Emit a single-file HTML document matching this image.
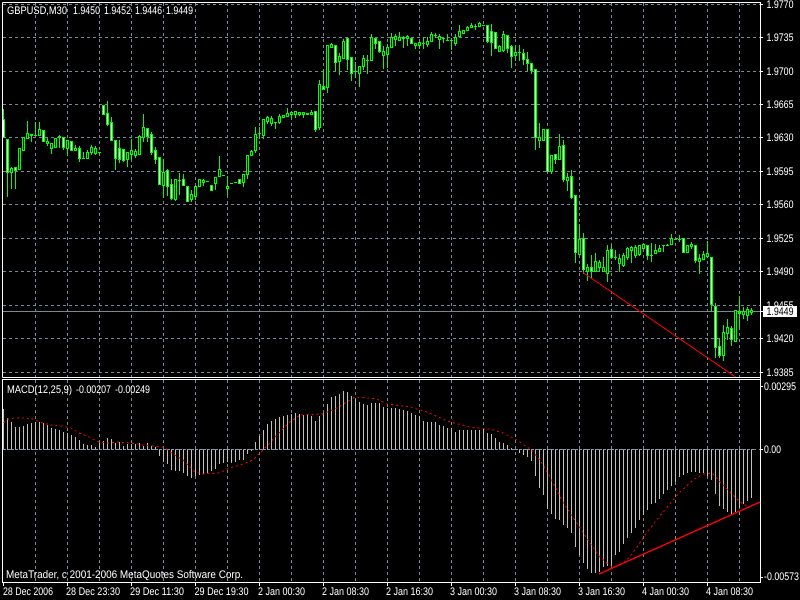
<!DOCTYPE html>
<html><head><meta charset="utf-8"><title>GBPUSD,M30</title>
<style>
html,body{margin:0;padding:0;background:#000;width:800px;height:600px;overflow:hidden}
svg{display:block;position:absolute;left:0;top:0}
text{font-family:"Liberation Sans",sans-serif;font-size:11px;fill:#fff;text-rendering:geometricPrecision}
path,rect,line,polyline{shape-rendering:crispEdges}
</style></head><body>
<svg width="800" height="600" viewBox="0 0 800 600" xmlns="http://www.w3.org/2000/svg">
<rect width="800" height="600" fill="#000"/>
<!-- grid -->
<path fill="none" stroke="#778899" stroke-dasharray="3 3" d="M3 4.5H760M3 37.5H760M3 71.5H760M3 104.5H760M3 137.5H760M3 171.5H760M3 204.5H760M3 238.5H760M3 271.5H760M3 305.5H760M3 338.5H760M3 372.5H760M3 449.5H760M35.5 3V377M67.5 3V377M99.5 3V377M131.5 3V377M163.5 3V377M195.5 3V377M227.5 3V377M259.5 3V377M291.5 3V377M323.5 3V377M355.5 3V377M387.5 3V377M419.5 3V377M451.5 3V377M483.5 3V377M515.5 3V377M547.5 3V377M579.5 3V377M611.5 3V377M643.5 3V377M675.5 3V377M707.5 3V377M739.5 3V377M35.5 380V582M67.5 380V582M99.5 380V582M131.5 380V582M163.5 380V582M195.5 380V582M227.5 380V582M259.5 380V582M291.5 380V582M323.5 380V582M355.5 380V582M387.5 380V582M419.5 380V582M451.5 380V582M483.5 380V582M515.5 380V582M547.5 380V582M579.5 380V582M611.5 380V582M643.5 380V582M675.5 380V582M707.5 380V582M739.5 380V582"/>
<!-- price line -->
<path stroke="#778899" d="M3 311.5H760"/>
<!-- wicks -->
<path fill="none" stroke="#00ff00" d="M3.5 109V138M7.5 139V197M11.5 167V189M15.5 167V189M19.5 148V170M23.5 137V151M27.5 121V139M31.5 134V142M35.5 122V136M39.5 122V136M43.5 130V142M47.5 138V146M51.5 143V154M55.5 138V148M59.5 135V148M63.5 137V150M67.5 140V156M71.5 141V151M75.5 145V151M79.5 146V162M83.5 152V159M87.5 150V159M91.5 145V155M95.5 146V155M99.5 152V155M103.5 105V115M107.5 101V126M111.5 117V141M115.5 140V170M119.5 140V163M123.5 149V162M127.5 152V167M131.5 139V160M135.5 149V158M139.5 135V155M143.5 114V142M147.5 128V142M151.5 132V155M155.5 147V164M159.5 157V185M163.5 159V198M167.5 169V196M171.5 179V200M175.5 179V201M179.5 173V195M183.5 174V186M187.5 186V202M191.5 190V202M195.5 186V200M199.5 179V187M203.5 179V186M207.5 181V182M211.5 185V191M215.5 177V190M219.5 156V177M223.5 175V176M227.5 176V195M231.5 183V184M235.5 182V183M239.5 179V184M243.5 174V187M247.5 155V179M251.5 150V156M255.5 127V153M259.5 127V139M263.5 119V139M267.5 116V124M271.5 116V126M275.5 122V129M279.5 114V124M283.5 115V118M287.5 108V117M291.5 112V118M295.5 111V118M299.5 112V116M303.5 112V118M307.5 113V115M311.5 110V115M315.5 111V132M319.5 80V130M323.5 70V90M327.5 45V93M331.5 43V48M335.5 45V71M339.5 53V75M343.5 39V59M347.5 38V70M351.5 57V81M355.5 62V78M359.5 66V87M363.5 55V70M367.5 55V74M371.5 34V61M375.5 38V49M379.5 41V53M383.5 46V69M387.5 44V68M391.5 33V48M395.5 34V46M399.5 32V41M403.5 36V48M407.5 35V46M411.5 38V44M415.5 43V49M419.5 42V49M423.5 37V49M427.5 37V47M431.5 32V42M435.5 33V38M439.5 34V49M443.5 38V43M447.5 34V41M451.5 38V50M455.5 34V46M459.5 25V37M463.5 30V34M467.5 26V31M471.5 23V28M475.5 24V30M479.5 22V27M483.5 25V26M487.5 25V43M491.5 24V56M495.5 32V49M499.5 45V52M503.5 31V52M507.5 35V53M511.5 45V68M515.5 47V61M519.5 45V61M523.5 49V65M527.5 52V71M531.5 63V74M535.5 69V150M539.5 123V148M543.5 129V141M547.5 129V172M551.5 155V174M555.5 154V164M559.5 134V160M563.5 140V182M567.5 173V191M571.5 170V199M575.5 195V263M579.5 224V255M583.5 233V274M587.5 264V281M591.5 255V278M595.5 253V272M599.5 260V272M603.5 257V272M607.5 245V282M611.5 245V259M615.5 250V260M619.5 254V272M623.5 253V267M627.5 247V260M631.5 246V263M635.5 245V258M639.5 245V256M643.5 243V249M647.5 245V260M651.5 243V262M655.5 244V254M659.5 245V252M663.5 245V252M667.5 244V246M671.5 234V245M675.5 239V240M679.5 235V242M683.5 238V253M687.5 245V253M691.5 242V249M695.5 245V263M699.5 254V274M703.5 251V260M707.5 241V258M711.5 257V312M715.5 303V358M719.5 338V358M723.5 325V361M727.5 319V340M731.5 326V346M735.5 310V342M739.5 296V330M743.5 307V319M747.5 307V321M751.5 308V315"/>
<!-- bodies -->
<path fill="none" stroke="#00ff00" stroke-width="3" d="M3.5 119V138M7.5 139V173M11.5 168V173M15.5 167V171M19.5 148V170M23.5 137V151M27.5 133V139M31.5 134V136M35.5 135V136M39.5 129V136M43.5 130V142M47.5 141V144M51.5 143V149M55.5 138V148M59.5 136V138M63.5 137V148M67.5 140V149M71.5 141V151M75.5 148V151M79.5 148V159M83.5 158V159M87.5 152V159M91.5 147V153M95.5 148V154M99.5 152V153M103.5 105V115M107.5 113V125M111.5 122V141M115.5 140V159M119.5 148V160M123.5 149V161M127.5 152V160M131.5 150V155M135.5 151V156M139.5 136V155M143.5 127V138M147.5 128V137M151.5 134V153M155.5 150V160M159.5 157V185M163.5 172V186M167.5 170V187M171.5 184V199M175.5 179V200M179.5 180V181M183.5 179V186M187.5 186V202M191.5 194V200M195.5 186V197M199.5 179V187M203.5 180V183M207.5 181V182M211.5 185V191M215.5 177V184M219.5 169V177M223.5 175V176M227.5 186V189M231.5 183V184M235.5 182V183M239.5 179V184M243.5 174V183M247.5 155V175M251.5 151V156M255.5 134V151M259.5 133V134M263.5 119V136M267.5 117V122M271.5 118V124M275.5 122V123M279.5 116V123M283.5 115V118M287.5 113V117M291.5 112V115M295.5 111V115M299.5 112V115M303.5 112V115M307.5 113V115M311.5 112V115M315.5 111V130M319.5 84V128M323.5 86V90M327.5 45V88M331.5 44V48M335.5 45V63M339.5 56V62M343.5 41V59M347.5 38V60M351.5 57V74M355.5 71V72M359.5 66V74M363.5 58V67M367.5 60V61M371.5 37V61M375.5 38V44M379.5 41V52M383.5 51V56M387.5 47V55M391.5 37V48M395.5 36V40M399.5 37V41M403.5 37V39M407.5 36V39M411.5 38V44M415.5 43V46M419.5 42V46M423.5 43V44M427.5 41V45M431.5 34V42M435.5 35V36M439.5 36V40M443.5 38V39M447.5 40V41M451.5 40V41M455.5 37V44M459.5 31V37M463.5 30V34M467.5 27V31M471.5 25V28M475.5 26V27M479.5 23V27M483.5 25V26M487.5 25V42M491.5 31V43M495.5 32V49M499.5 46V52M503.5 34V51M507.5 35V49M511.5 46V57M515.5 52V56M519.5 52V53M523.5 53V60M527.5 59V64M531.5 63V71M535.5 69V138M539.5 137V141M543.5 129V141M547.5 129V172M551.5 155V172M555.5 154V160M559.5 146V160M563.5 145V180M567.5 177V181M571.5 176V198M575.5 195V253M579.5 239V255M583.5 238V270M587.5 267V272M591.5 267V272M595.5 261V272M599.5 262V268M603.5 267V272M607.5 250V274M611.5 249V258M615.5 257V258M619.5 258V264M623.5 255V266M627.5 248V258M631.5 247V251M635.5 247V256M639.5 245V255M643.5 244V249M647.5 245V256M651.5 255V256M655.5 250V254M659.5 248V252M663.5 245V246M667.5 245V246M671.5 238V245M675.5 239V240M679.5 239V240M683.5 238V253M687.5 245V253M691.5 244V247M695.5 245V261M699.5 258V262M703.5 254V260M707.5 253V257M711.5 257V305M715.5 306V348M719.5 346V356M723.5 332V356M727.5 327V334M731.5 328V340M735.5 310V342M739.5 311V314M743.5 311V315M747.5 309V316M751.5 310V313"/>
<!-- white-filled interiors -->
<path fill="none" stroke="#ffffff" d="M3.5 120V137M7.5 140V172M15.5 168V170M43.5 131V141M63.5 138V147M71.5 142V150M79.5 149V158M103.5 106V114M107.5 114V124M111.5 123V140M115.5 141V158M119.5 149V159M123.5 150V160M147.5 129V136M151.5 135V152M155.5 151V159M159.5 158V184M167.5 171V186M171.5 185V198M183.5 180V185M187.5 187V201M211.5 186V190M239.5 180V183M315.5 112V129M323.5 87V89M335.5 46V62M347.5 39V59M351.5 58V73M375.5 39V43M379.5 42V51M411.5 39V43M487.5 26V41M491.5 32V42M495.5 33V48M507.5 36V48M511.5 47V56M523.5 54V59M527.5 60V63M531.5 64V70M535.5 70V137M547.5 130V171M555.5 155V159M563.5 146V179M571.5 177V197M575.5 196V252M583.5 239V269M591.5 268V271M611.5 250V257M647.5 246V255M683.5 239V252M695.5 246V260M711.5 258V304M715.5 307V347M719.5 347V355M731.5 329V339"/>
<!-- black interiors -->
<path fill="none" stroke="#000000" d="M11.5 169V172M19.5 149V169M23.5 138V150M27.5 134V138M39.5 130V135M47.5 142V143M51.5 144V148M55.5 139V147M67.5 141V148M75.5 149V150M87.5 153V158M91.5 148V152M95.5 149V153M127.5 153V159M131.5 151V154M135.5 152V155M139.5 137V154M143.5 128V137M163.5 173V185M175.5 180V199M191.5 195V199M195.5 187V196M199.5 180V186M203.5 181V182M215.5 178V183M219.5 170V176M227.5 187V188M243.5 175V182M247.5 156V174M251.5 152V155M255.5 135V150M263.5 120V135M267.5 118V121M271.5 119V123M279.5 117V122M283.5 116V117M287.5 114V116M291.5 113V114M295.5 112V114M299.5 113V114M303.5 113V114M311.5 113V114M319.5 85V127M327.5 46V87M331.5 45V47M339.5 57V61M343.5 42V58M359.5 67V73M363.5 59V66M371.5 38V60M383.5 52V55M387.5 48V54M391.5 38V47M395.5 37V39M399.5 38V40M403.5 38V38M407.5 37V38M415.5 44V45M419.5 43V45M427.5 42V44M431.5 35V41M439.5 37V39M455.5 38V43M459.5 32V36M463.5 31V33M467.5 28V30M471.5 26V27M479.5 24V26M499.5 47V51M503.5 35V50M515.5 53V55M539.5 138V140M543.5 130V140M551.5 156V171M559.5 147V159M567.5 178V180M579.5 240V254M587.5 268V271M595.5 262V271M599.5 263V267M603.5 268V271M607.5 251V273M619.5 259V263M623.5 256V265M627.5 249V257M631.5 248V250M635.5 248V255M639.5 246V254M643.5 245V248M655.5 251V253M659.5 249V251M671.5 239V244M687.5 246V252M691.5 245V246M699.5 259V261M703.5 255V259M707.5 254V256M723.5 333V355M727.5 328V333M735.5 311V341M743.5 312V314M747.5 310V315M751.5 311V312"/>
<!-- MACD histogram -->
<path fill="none" stroke="#c0c0c0" d="M3.5 409V450M7.5 418V450M11.5 422V450M15.5 427V450M19.5 427V450M23.5 426V450M27.5 424V450M31.5 423V450M35.5 422V450M39.5 422V450M43.5 423V450M47.5 425V450M51.5 428V450M55.5 429V450M59.5 430V450M63.5 432V450M67.5 433V450M71.5 435V450M75.5 437V450M79.5 440V450M83.5 444V450M87.5 445V450M91.5 445V450M95.5 447V450M99.5 443V450M103.5 441V450M107.5 438V450M111.5 439V450M115.5 443V450M119.5 442V450M123.5 446V450M127.5 444V450M131.5 444V450M135.5 444V450M139.5 443V450M143.5 446V450M147.5 443V450M151.5 446V450M155.5 447V450M159.5 449V456M163.5 449V462M167.5 449V464M171.5 449V470M175.5 449V471M179.5 449V471M183.5 449V473M187.5 449V476M191.5 449V478M195.5 449V476M199.5 449V475M203.5 449V474M207.5 449V473M211.5 449V471M215.5 449V469M219.5 449V464M223.5 449V463M227.5 449V462M231.5 449V463M235.5 449V462M239.5 449V460M243.5 449V460M247.5 449V454M251.5 449V451M255.5 442V450M259.5 436V450M263.5 430V450M267.5 424V450M271.5 421V450M275.5 419V450M279.5 417V450M283.5 416V450M287.5 415V450M291.5 414V450M295.5 413V450M299.5 414V450M303.5 415V450M307.5 415V450M311.5 416V450M315.5 421V450M319.5 416V450M323.5 413V450M327.5 404V450M331.5 397V450M335.5 396V450M339.5 394V450M343.5 391V450M347.5 392V450M351.5 396V450M355.5 399V450M359.5 402V450M363.5 404V450M367.5 405V450M371.5 403V450M375.5 403V450M379.5 403V450M383.5 407V450M387.5 408V450M391.5 408V450M395.5 408V450M399.5 409V450M403.5 410V450M407.5 411V450M411.5 413V450M415.5 415V450M419.5 416V450M423.5 421V450M427.5 422V450M431.5 422V450M435.5 422V450M439.5 425V450M443.5 426V450M447.5 428V450M451.5 428V450M455.5 432V450M459.5 430V450M463.5 430V450M467.5 430V450M471.5 430V450M475.5 430V450M479.5 430V450M483.5 429V450M487.5 433V450M491.5 434V450M495.5 438V450M499.5 442V450M503.5 443V450M507.5 445V450M511.5 448V450M519.5 449V453M523.5 449V455M527.5 449V457M531.5 449V461M535.5 449V476M539.5 449V488M543.5 449V495M547.5 449V509M551.5 449V514M555.5 449V519M559.5 449V520M563.5 449V525M567.5 449V528M571.5 449V533M575.5 449V547M579.5 449V555M583.5 449V563M587.5 449V569M591.5 449V573M595.5 449V573M599.5 449V572M603.5 449V567M607.5 449V566M611.5 449V566M615.5 449V555M619.5 449V552M623.5 449V544M627.5 449V538M631.5 449V533M635.5 449V528M639.5 449V520M643.5 449V515M647.5 449V510M651.5 449V504M655.5 449V503M659.5 449V499M663.5 449V494M667.5 449V490M671.5 449V486M675.5 449V482M679.5 449V477M683.5 449V475M687.5 449V473M691.5 449V472M695.5 449V472M699.5 449V473M703.5 449V473M707.5 449V476M711.5 449V480M715.5 449V494M719.5 449V506M723.5 449V509M727.5 449V512M731.5 449V514M735.5 449V512M739.5 449V508M743.5 449V504M747.5 449V501M751.5 449V498"/>
<path fill="none" stroke="#8a9bad" stroke-dasharray="3 1" d="M3 449.5H755"/>
<!-- signal line -->
<polyline fill="none" stroke="#ff0000" stroke-dasharray="2 3" points="3.5,423 7.5,419 15,418 23,418 33,419 43,423 51,425 63,426 71,428 79,433 87,436 99,442 107,443 119,442 131,443 143,445 163,447 173,454 183,460 195,472 203,474 220,473 227,469 243,464 253,460 263,450 270,443 277,435 290,422 300,415 323,414 337,408 350,400 355,397 377,399 387,404 410,407 427,412 447,421 470,427 490,429 503,433 517,440 530,449 540,460 550,477 563,502 578,525 590,543 600,557 612,567 618,566 627,560 637,547 645,535 663,512 680,492 693,480 703,474 712,473 720,482 730,492 740,502 747,506"/>
<!-- trend lines -->
<line x1="583" y1="272.5" x2="737" y2="378" stroke="#ff0000" stroke-width="1"/>
<line x1="599" y1="574" x2="760" y2="502" stroke="#ff0000" stroke-width="1.4"/>
<!-- frame -->
<path fill="none" stroke="#ffffff" d="M2.5 2.5H760.5V582.5H2.5V379.5H760.5M2.5 377.5H760.5M2.5 2.5V377.5"/>
<path fill="none" stroke="#ffffff" d="M3.5 583V586M67.5 583V586M131.5 583V586M195.5 583V586M259.5 583V586M323.5 583V586M387.5 583V586M451.5 583V586M515.5 583V586M579.5 583V586M643.5 583V586M707.5 583V586M761 4.5H763M761 37.5H763M761 71.5H763M761 104.5H763M761 137.5H763M761 171.5H763M761 204.5H763M761 238.5H763M761 271.5H763M761 338.5H763M761 372.5H763M761 386.5H763M761 449.5H763M761 577.5H763"/>
<!-- top legend -->
<text x="7" y="14" textLength="60" lengthAdjust="spacingAndGlyphs">GBPUSD,M30</text>
<text x="73" y="14" textLength="27" lengthAdjust="spacingAndGlyphs">1.9450</text>
<text x="104" y="14" textLength="27" lengthAdjust="spacingAndGlyphs">1.9452</text>
<text x="135" y="14" textLength="27" lengthAdjust="spacingAndGlyphs">1.9446</text>
<text x="166" y="14" textLength="27" lengthAdjust="spacingAndGlyphs">1.9449</text>
<!-- price axis -->
<text x="766.5" y="8" textLength="27" lengthAdjust="spacingAndGlyphs">1.9770</text>
<text x="766.5" y="41" textLength="27" lengthAdjust="spacingAndGlyphs">1.9735</text>
<text x="766.5" y="75" textLength="27" lengthAdjust="spacingAndGlyphs">1.9700</text>
<text x="766.5" y="108" textLength="27" lengthAdjust="spacingAndGlyphs">1.9665</text>
<text x="766.5" y="141" textLength="27" lengthAdjust="spacingAndGlyphs">1.9630</text>
<text x="766.5" y="175" textLength="27" lengthAdjust="spacingAndGlyphs">1.9595</text>
<text x="766.5" y="208" textLength="27" lengthAdjust="spacingAndGlyphs">1.9560</text>
<text x="766.5" y="242" textLength="27" lengthAdjust="spacingAndGlyphs">1.9525</text>
<text x="766.5" y="275" textLength="27" lengthAdjust="spacingAndGlyphs">1.9490</text>
<text x="766.5" y="309" textLength="27" lengthAdjust="spacingAndGlyphs">1.9455</text>
<text x="766.5" y="342" textLength="27" lengthAdjust="spacingAndGlyphs">1.9420</text>
<text x="766.5" y="376" textLength="27" lengthAdjust="spacingAndGlyphs">1.9385</text>
<rect x="763" y="306" width="34" height="11" fill="#fff"/>
<path stroke="#fff" d="M760 311.5H763"/>
<text x="766.5" y="315" textLength="27" lengthAdjust="spacingAndGlyphs" style="fill:#000">1.9449</text>
<!-- MACD axis -->
<text x="764" y="390" textLength="32" lengthAdjust="spacingAndGlyphs">0.00295</text>
<text x="764" y="453" textLength="17" lengthAdjust="spacingAndGlyphs">0.00</text>
<text x="764" y="580" textLength="35" lengthAdjust="spacingAndGlyphs">-0.00573</text>
<!-- MACD legend -->
<text x="7" y="393" textLength="65" lengthAdjust="spacingAndGlyphs">MACD(12,25,9)</text>
<text x="76" y="393" textLength="35" lengthAdjust="spacingAndGlyphs">-0.00207</text>
<text x="115" y="393" textLength="35" lengthAdjust="spacingAndGlyphs">-0.00249</text>
<text x="6" y="578" textLength="237" lengthAdjust="spacingAndGlyphs">MetaTrader, c 2001-2006 MetaQuotes Software Corp.</text>
<!-- time axis -->
<text x="3" y="595" textLength="50" lengthAdjust="spacingAndGlyphs">28 Dec 2006</text>
<text x="66" y="595" textLength="54" lengthAdjust="spacingAndGlyphs">28 Dec 23:30</text>
<text x="130" y="595" textLength="54" lengthAdjust="spacingAndGlyphs">29 Dec 11:30</text>
<text x="194.5" y="595" textLength="54" lengthAdjust="spacingAndGlyphs">29 Dec 19:30</text>
<text x="258" y="595" textLength="47" lengthAdjust="spacingAndGlyphs">2 Jan 00:30</text>
<text x="322" y="595" textLength="47" lengthAdjust="spacingAndGlyphs">2 Jan 08:30</text>
<text x="386" y="595" textLength="47" lengthAdjust="spacingAndGlyphs">2 Jan 16:30</text>
<text x="450" y="595" textLength="47" lengthAdjust="spacingAndGlyphs">3 Jan 00:30</text>
<text x="514" y="595" textLength="47" lengthAdjust="spacingAndGlyphs">3 Jan 08:30</text>
<text x="578" y="595" textLength="47" lengthAdjust="spacingAndGlyphs">3 Jan 16:30</text>
<text x="642" y="595" textLength="47" lengthAdjust="spacingAndGlyphs">4 Jan 00:30</text>
<text x="706" y="595" textLength="47" lengthAdjust="spacingAndGlyphs">4 Jan 08:30</text>
</svg>
</body></html>
